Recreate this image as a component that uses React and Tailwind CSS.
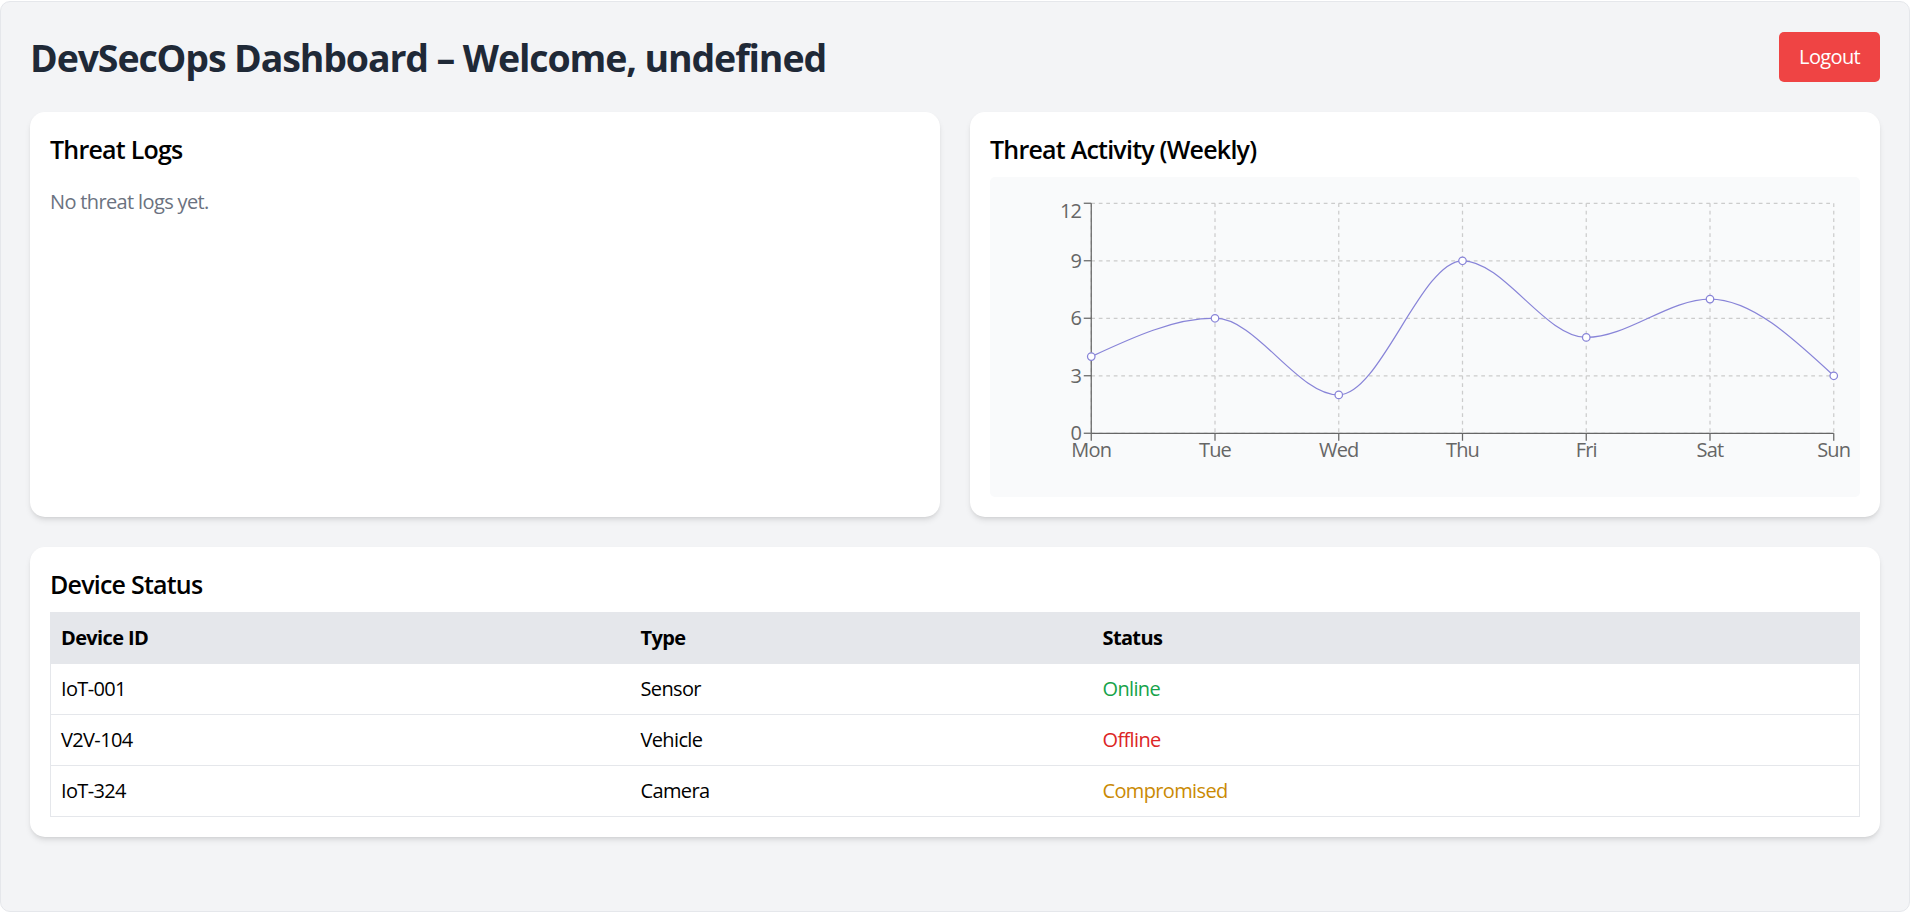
import React from 'react';

const activity = [
  { day: 'Mon', threats: 4 },
  { day: 'Tue', threats: 6 },
  { day: 'Wed', threats: 2 },
  { day: 'Thu', threats: 9 },
  { day: 'Fri', threats: 5 },
  { day: 'Sat', threats: 7 },
  { day: 'Sun', threats: 3 },
];

const devices = [
  { id: 'IoT-001', type: 'Sensor', status: 'Online' },
  { id: 'V2V-104', type: 'Vehicle', status: 'Offline' },
  { id: 'IoT-324', type: 'Camera', status: 'Compromised' },
];

const statusColor = {
  Online: 'text-[#16a34a]',
  Offline: 'text-[#dc2626]',
  Compromised: 'text-[#ca8a04]',
};

// monotone-x curve, same maths as d3's curveMonotoneX
function monotonePath(pts) {
  const sign = (v) => (v < 0 ? -1 : 1);
  const n = pts.length;
  const t = new Array(n).fill(0);
  for (let i = 1; i < n - 1; i++) {
    const [x0, y0] = pts[i - 1];
    const [x1, y1] = pts[i];
    const [x2, y2] = pts[i + 1];
    const h0 = x1 - x0;
    const h1 = x2 - x1;
    const s0 = (y1 - y0) / h0;
    const s1 = (y2 - y1) / h1;
    const p = (s0 * h1 + s1 * h0) / (h0 + h1);
    t[i] = (sign(s0) + sign(s1)) * Math.min(Math.abs(s0), Math.abs(s1), 0.5 * Math.abs(p)) || 0;
  }
  const slope2 = (a, b, tt) => {
    const h = b[0] - a[0];
    return h ? (3 * (b[1] - a[1]) / h - tt) / 2 : tt;
  };
  t[0] = slope2(pts[0], pts[1], t[1]);
  t[n - 1] = slope2(pts[n - 2], pts[n - 1], t[n - 2]);
  let d = `M${pts[0][0]},${pts[0][1]}`;
  for (let i = 0; i < n - 1; i++) {
    const [x0, y0] = pts[i];
    const [x1, y1] = pts[i + 1];
    const dx = (x1 - x0) / 3;
    d += `C${x0 + dx},${y0 + dx * t[i]},${x1 - dx},${y1 - dx * t[i + 1]},${x1},${y1}`;
  }
  return d;
}

function ActivityChart() {
  // drawn in 664x224 units, shown at 830x280
  const left = 65;
  const right = 659;
  const top = 5;
  const bottom = 189;
  const step = (right - left) / (activity.length - 1);
  const yOf = (v) => bottom - (v / 12) * (bottom - top);
  const xs = activity.map((_, i) => left + i * step);
  const pts = activity.map((d, i) => [xs[i], yOf(d.threats)]);
  const yTicks = [0, 3, 6, 9, 12];

  return (
    <svg width="830" height="280" viewBox="0 0 664 224" className="block overflow-visible">
      <g stroke="#ccc" strokeDasharray="3 3" fill="none">
        {yTicks.map((v) => (
          <line key={`h${v}`} x1={left} x2={right} y1={yOf(v)} y2={yOf(v)} />
        ))}
        {xs.map((x, i) => (
          <line key={`v${i}`} x1={x} x2={x} y1={top} y2={bottom} />
        ))}
      </g>

      <g stroke="#666" fill="none">
        <line x1={left} x2={left} y1={top} y2={bottom} />
        <line x1={left} x2={right} y1={bottom} y2={bottom} />
        {yTicks.map((v) => (
          <line key={`yt${v}`} x1={left - 6} x2={left} y1={yOf(v)} y2={yOf(v)} />
        ))}
        {xs.map((x, i) => (
          <line key={`xt${i}`} x1={x} x2={x} y1={bottom} y2={bottom + 6} />
        ))}
      </g>

      <g fill="#666" fontSize="16">
        {yTicks.map((v) => (
          <text
            key={`yl${v}`}
            x={left - 8}
            y={v === 12 ? yOf(v) + 6 : yOf(v)}
            dy="0.355em"
            textAnchor="end"
          >
            {v}
          </text>
        ))}
        {activity.map((d, i) => (
          <text key={d.day} x={xs[i]} y={bottom + 8} dy="0.71em" textAnchor="middle">
            {d.day}
          </text>
        ))}
      </g>

      <path d={monotonePath(pts)} fill="none" stroke="#8884d8" strokeWidth="1" />
      {pts.map(([x, y], i) => (
        <circle key={i} cx={x} cy={y} r="3" fill="#fff" stroke="#8884d8" strokeWidth="1" />
      ))}
    </svg>
  );
}

export default function App() {
  return (
    <div className="bg-white pt-px pr-px font-['Open_Sans',sans-serif] tracking-[-0.04em]">
      <div className="min-h-[911px] rounded-[10px] border border-[#e5e7eb] bg-[#f3f4f6] px-[29px] pt-[30px] pb-[30px]">
        <div className="flex items-center justify-between mb-[30px]">
          <h1 className="text-[37.5px] leading-[45px] font-bold tracking-[-0.03em] text-[#1f2937]">
            DevSecOps Dashboard – Welcome, undefined
          </h1>
          <button className="bg-[#ef4444] text-white text-[20px] leading-[30px] px-[20px] py-[10px] rounded-[5px]">
            Logout
          </button>
        </div>

        <div className="grid grid-cols-2 gap-[30px]">
          <div className="bg-white rounded-[15px] shadow-md p-[20px]">
            <h2 className="text-[25px] leading-[35px] font-semibold tracking-[-0.031em] text-black mb-[20px]">
              Threat Logs
            </h2>
            <p className="text-[20px] leading-[30px] text-[#6b7280]">No threat logs yet.</p>
          </div>

          <div className="bg-white rounded-[15px] shadow-md p-[20px]">
            <h2 className="text-[25px] leading-[35px] font-semibold tracking-[-0.031em] text-black mb-[10px]">
              Threat Activity (Weekly)
            </h2>
            <div className="h-[320px] bg-[#f9fafb] rounded-[5px] p-[20px]">
              <ActivityChart />
            </div>
          </div>
        </div>

        <div className="mt-[30px] bg-white rounded-[15px] shadow-md p-[20px]">
          <h2 className="text-[25px] leading-[35px] font-semibold tracking-[-0.031em] text-black mb-[10px]">
            Device Status
          </h2>
          <table className="w-full border border-[#e5e7eb] text-[20px] leading-[30px] text-black">
            <thead>
              <tr className="bg-[#e5e7eb]">
                <th className="w-[580px] p-[10px] text-left font-bold">Device ID</th>
                <th className="w-[462px] p-[10px] text-left font-bold">Type</th>
                <th className="p-[10px] text-left font-bold">Status</th>
              </tr>
            </thead>
            <tbody>
              {devices.map((d) => (
                <tr key={d.id} className="border-t border-[#e5e7eb]">
                  <td className="p-[10px]">{d.id}</td>
                  <td className="p-[10px]">{d.type}</td>
                  <td className={`p-[10px] ${statusColor[d.status]}`}>{d.status}</td>
                </tr>
              ))}
            </tbody>
          </table>
        </div>
      </div>
    </div>
  );
}
